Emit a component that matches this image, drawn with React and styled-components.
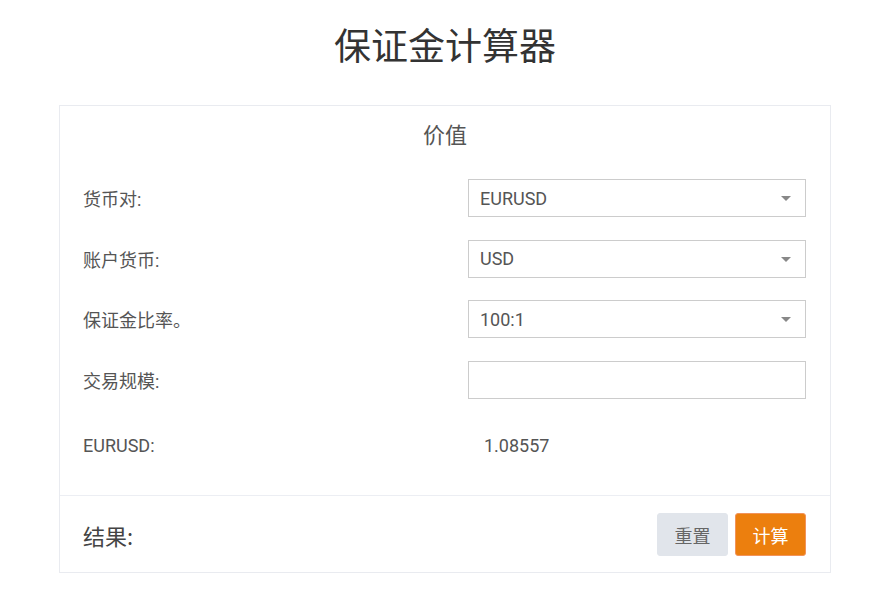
import styled, { createGlobalStyle } from "styled-components";

const GlobalStyle = createGlobalStyle`
    body {
        margin: 0;
        background: #ffffff;
        font-family: Roboto, "Noto Sans CJK SC", sans-serif;
    }
`;

const fields = [
    { label: "货币对:", value: "EURUSD", select: true },
    { label: "账户货币:", value: "USD", select: true },
    { label: "保证金比率。", value: "100:1", select: true },
    { label: "交易规模:", value: "", select: false },
];

export default function App() {
    return (
        <Page>
            <GlobalStyle />
            <Title>保证金计算器</Title>
            <Card>
                <CardHeader>价值</CardHeader>
                <Form>
                    {fields.map((f) => (
                        <Row key={f.label}>
                            <Label>{f.label}</Label>
                            <Field>
                                {f.value}
                                {f.select && <Caret />}
                            </Field>
                        </Row>
                    ))}
                    <Row $offset>
                        <Label>EURUSD:</Label>
                        <Rate>1.08557</Rate>
                    </Row>
                </Form>
                <Footer>
                    <ResultLabel>结果:</ResultLabel>
                    <Buttons>
                        <Button>重置</Button>
                        <Button $primary>计算</Button>
                    </Buttons>
                </Footer>
            </Card>
        </Page>
    );
}

const Page = styled.div`
    padding-top: 19px;
    padding-left: 59px;
`;

const Title = styled.h1`
    margin: 0 0 36px;
    width: 772px;
    text-align: center;
    font-family: "Noto Sans CJK SC", sans-serif;
    font-weight: 400;
    font-size: 37px;
    line-height: 50px;
    color: #333333;
`;

const Card = styled.div`
    width: 770px;
    border: 1px solid #e9ebf0;
    background: #ffffff;
`;

const CardHeader = styled.div`
    padding-top: 12px;
    text-align: center;
    font-family: "Noto Sans CJK SC", sans-serif;
    font-size: 22px;
    line-height: 30px;
    color: #555555;
`;

const Form = styled.div`
    display: flex;
    flex-direction: column;
    gap: 22.5px;
    padding: 31px 24px 31px 23px;
    border-bottom: 1px solid #eceef3;
`;

const Row = styled.div`
    display: grid;
    grid-template-columns: 385px 338px;
    align-items: center;
    min-height: 38px;
    margin-top: ${(p) => (p.$offset ? "5px" : "0")};
`;

const Label = styled.div`
    font-family: Roboto, "Noto Sans CJK SC", sans-serif;
    font-size: 18px;
    color: #555555;
`;

const Field = styled.div`
    position: relative;
    box-sizing: border-box;
    height: 38px;
    padding: 0 11px;
    display: flex;
    align-items: center;
    border: 1px solid #cccccc;
    font-size: 18px;
    color: #555555;
`;

const Caret = styled.span`
    position: absolute;
    right: 14px;
    top: 16px;
    width: 0;
    height: 0;
    border-left: 5px solid transparent;
    border-right: 5px solid transparent;
    border-top: 5px solid #888888;
`;

const Rate = styled.div`
    padding-left: 16px;
    font-size: 18px;
    color: #555555;
`;

const Footer = styled.div`
    display: flex;
    align-items: center;
    justify-content: space-between;
    padding: 17px 24px 16px 23px;
`;

const ResultLabel = styled.div`
    font-family: "Noto Sans CJK SC", sans-serif;
    font-size: 22px;
    color: #444444;
`;

const Buttons = styled.div`
    display: flex;
    gap: 7px;
`;

const Button = styled.button`
    width: 71px;
    height: 43px;
    border-radius: 3px;
    border: 1px solid ${(p) => (p.$primary ? "#f2935a" : "#e1e5eb")};
    background: ${(p) => (p.$primary ? "#ec7f0e" : "#e1e5eb")};
    color: ${(p) => (p.$primary ? "#ffffff" : "#666666")};
    font-family: "Noto Sans CJK SC", sans-serif;
    font-size: 18px;
    padding: 0;
`;
